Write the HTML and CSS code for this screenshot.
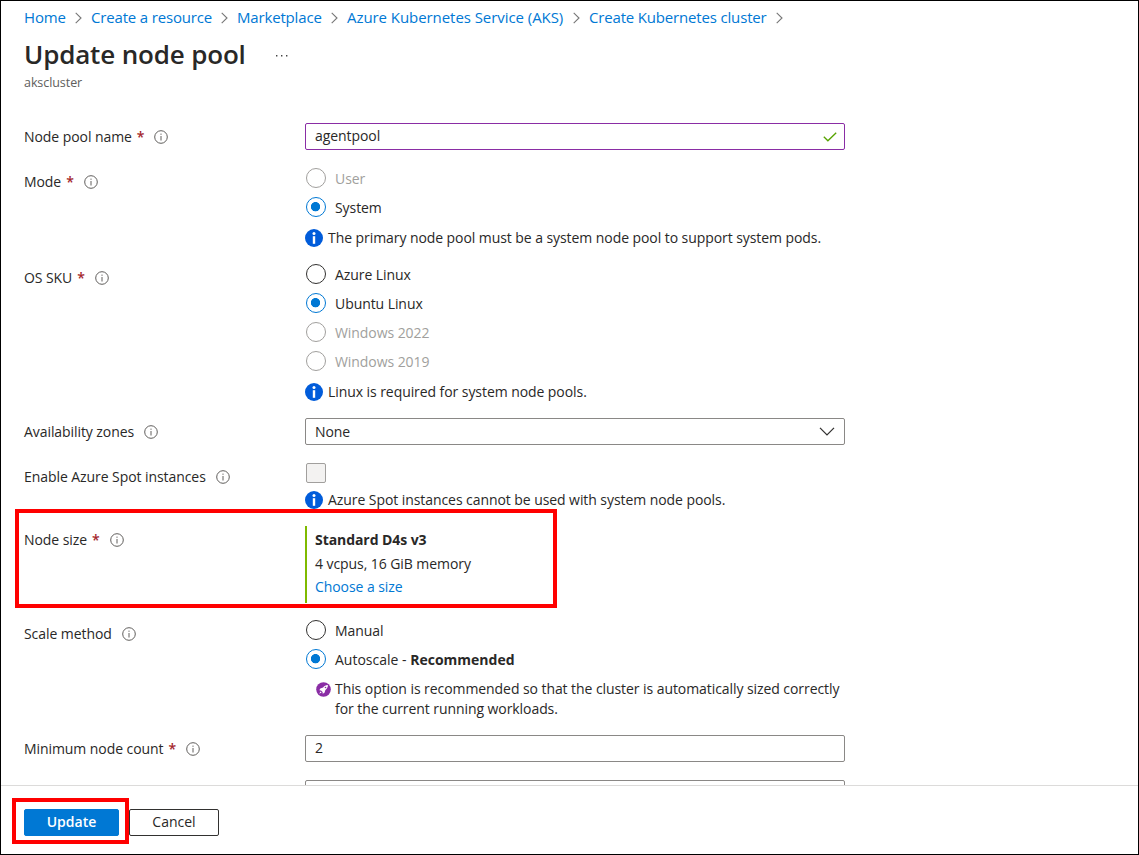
FILE: index.html
```html
<!DOCTYPE html>
<html lang="en">
<head>
<meta charset="utf-8">
<title>Update node pool</title>
<link rel="stylesheet" href="styles.css">
</head>
<body>
<svg class="defs" width="0" height="0">
  <symbol id="chevron" viewBox="0 0 7 12"><path d="M.7.9 6 6 .7 11.100" fill="none" stroke="#777" stroke-width="1.100"/></symbol>
  <symbol id="help" viewBox="0 0 14 14"><circle cx="7" cy="7" r="6.300" fill="none" stroke="#605e5c" stroke-width="1"/><path d="M7 6v4.500M7 3.600v1.200" stroke="#605e5c" stroke-width="1"/></symbol>
  <symbol id="info" viewBox="0 0 18 18"><circle cx="9" cy="9" r="9" fill="#015cda"/><circle cx="9" cy="4.500" r="1.500" fill="#fff"/><path d="M7.800 7.200h2.400v7.600H7.800z" fill="#fff"/></symbol>
</svg>
<div class="page">
  <nav class="crumbs">
    <a class="c1">Home</a><svg><use href="#chevron"/></svg>
    <a class="c2">Create a resource</a><svg><use href="#chevron"/></svg>
    <a class="c3">Marketplace</a><svg><use href="#chevron"/></svg>
    <a class="c4">Azure Kubernetes Service (AKS)</a><svg><use href="#chevron"/></svg>
    <a class="c5">Create Kubernetes cluster</a><svg><use href="#chevron"/></svg>
  </nav>
  <header class="heading">
    <h1>Update node pool</h1>
    <svg class="more" viewBox="0 0 14 4"><path d="M1 1h1.400v1.400H1zM6 1h1.400v1.400H6zM11 1h1.400v1.400H11z" fill="#444"/></svg>
  </header>
  <p class="subtitle">akscluster</p>

  <main class="form">
    <section class="row wide">
      <div class="label"><span>Node pool name</span><b>*</b><svg><use href="#help"/></svg></div>
      <div class="field"><div class="box input valid"><span>agentpool</span><svg class="check" viewBox="0 0 14 10"><path d="M.8 4.800 4.900 8.800 13.200.8" fill="none" stroke="#57a300" stroke-width="1.300"/></svg></div></div>
    </section>
    <section class="row">
      <div class="label"><span>Mode</span><b>*</b><svg><use href="#help"/></svg></div>
      <div class="field">
        <div class="radio off"><i></i><span>User</span></div>
        <div class="radio on"><i></i><span>System</span></div>
        <div class="message"><svg><use href="#info"/></svg><span>The primary node pool must be a system node pool to support system pods.</span></div>
      </div>
    </section>
    <section class="row">
      <div class="label"><span>OS SKU</span><b>*</b><svg><use href="#help"/></svg></div>
      <div class="field">
        <div class="radio"><i></i><span>Azure Linux</span></div>
        <div class="radio on"><i></i><span>Ubuntu Linux</span></div>
        <div class="radio off"><i></i><span>Windows 2022</span></div>
        <div class="radio off"><i></i><span>Windows 2019</span></div>
        <div class="message"><svg><use href="#info"/></svg><span>Linux is required for system node pools.</span></div>
      </div>
    </section>
    <section class="row wide">
      <div class="label"><span>Availability zones</span><svg><use href="#help"/></svg></div>
      <div class="field"><div class="box"><span>None</span><svg class="caret" viewBox="0 0 16 9"><path d="M1 .9 8 7.900 15 .9" fill="none" stroke="#323130" stroke-width="1.300"/></svg></div></div>
    </section>
    <section class="row">
      <div class="label"><span>Enable Azure Spot instances</span><svg><use href="#help"/></svg></div>
      <div class="field">
        <div class="checkbox"></div>
        <div class="message tight"><svg><use href="#info"/></svg><span>Azure Spot instances cannot be used with system node pools.</span></div>
      </div>
    </section>
    <section class="row size-row">
      <div class="label"><span>Node size</span><b>*</b><svg><use href="#help"/></svg></div>
      <div class="field size"><strong>Standard D4s v3</strong><span>4 vcpus, 16 GiB memory</span><a>Choose a size</a></div>
      <div class="mark mark-size"></div>
    </section>
    <section class="row">
      <div class="label"><span>Scale method</span><svg><use href="#help"/></svg></div>
      <div class="field">
        <div class="radio"><i></i><span>Manual</span></div>
        <div class="radio on"><i></i><span class="auto">Autoscale - <strong>Recommended</strong></span></div>
        <div class="note">
          <svg viewBox="0 0 15 15"><circle cx="7.500" cy="7.500" r="7.300" fill="#8a2da5"/><path d="M11.900 3.100C9.800 3 8.200 4 7.100 5.600L4.300 6.500 3.300 8.300l1.700.1 1.600 1.600.1 1.800 1.800-1 .9-2.900C11 6.800 12 5.200 11.900 3.100zM4.500 9.400 3.200 11.800 5.600 10.500z" fill="#fff"/><circle cx="9.500" cy="5.500" r=".8" fill="#8a2da5"/></svg>
          <p><span>This option is recommended so that the cluster is automatically sized correctly</span><br><span>for the current running workloads.</span></p>
        </div>
      </div>
    </section>
    <section class="row wide">
      <div class="label"><span>Minimum node count</span><b>*</b><svg><use href="#help"/></svg></div>
      <div class="field"><div class="box input"><span>2</span></div></div>
    </section>
    <section class="row">
      <div class="label"></div>
      <div class="field"><div class="box"></div></div>
    </section>
  </main>

  <footer class="actions">
    <div class="primary-wrap"><button class="primary">Update</button><div class="mark mark-update"></div></div>
    <button class="secondary">Cancel</button>
  </footer>
</div>
</body>
</html>
```
FILE: styles.css
```css
* { box-sizing: border-box; }
body {
  margin: 0;
  background: #fff;
  color: #292827;
  font: 14px/20px "Open Sans", "Noto Sans", sans-serif;
  letter-spacing: -0.07px;
}
p, h1 { margin: 0; }
a { color: #0078d4; }
svg { flex: none; display: block; }
span, a, strong { white-space: nowrap; }
.defs { position: absolute; }

.page {
  width: 1139px;
  height: 855px;
  border: 1px solid #000;
  display: flex;
  flex-direction: column;
  overflow: hidden;
}

.crumbs { display: flex; align-items: center; height: 20px; margin: 6px 0 0 23px; font-size: 15px; letter-spacing: -0.17px; }
.crumbs svg { width: 7px; height: 12px; margin: 2px 9px 0; }
.c1 { width: 42px; }
.c2 { width: 121px; }
.c3 { width: 85px; }
.c4 { width: 217px; letter-spacing: -0.06px; }
.c5 { width: 178px; }

.heading { display: flex; align-items: center; height: 36px; margin: 9px 0 0 23px; }
h1 { width: 222px; font-size: 26px; line-height: 36px; font-weight: 600; letter-spacing: -0.16px; white-space: nowrap; }
.more { width: 14px; height: 4px; margin: 3px 0 0 29px; }
.subtitle { margin: 1px 0 0 23px; font-size: 12.5px; color: #605e5c; }

.form { flex: 1; min-height: 0; overflow: hidden; padding: 30px 0 0 23px; }
.row { display: flex; margin-bottom: 16px; }
.wide { margin-bottom: 18px; }
.label { display: flex; align-items: center; width: 281px; height: 20px; margin-top: 4px; }
.label b { margin-left: 5px; color: #a4262c; font-weight: 600; }
.label svg { width: 14px; height: 14px; margin-left: 10px; }
.field { width: 540px; }

.box { display: flex; align-items: center; justify-content: space-between; height: 27px; padding: 0 9px; border: 1px solid #8a8886; border-radius: 2px; }
.input span { padding-bottom: 2px; }
.valid { border-color: #8a2da5; }
.check { width: 14px; height: 10px; margin-right: -2px; }
.caret { width: 16px; height: 9px; }

.radio { display: flex; align-items: center; height: 20px; margin: 0 0 9px 1px; }
.radio i { width: 20px; height: 20px; margin-right: 9px; border: 1px solid #323130; border-radius: 50%; }
.radio span { padding-top: 1px; }
.radio.on i { border-color: #0078d4; background: radial-gradient(circle at 8.500px 8.700px, #0078d4 4.300px, #fff 5px); }
.radio.off { color: #a19f9d; }
.radio.off i { border-color: #a19f9d; }

.message { display: flex; align-items: center; height: 20px; margin-top: 11px; }
.message svg { width: 18px; height: 18px; margin-right: 5px; }
.message.tight { margin-top: 7px; }
.checkbox { width: 20px; height: 20px; margin-left: 1px; border: 1px solid #a19f9d; border-radius: 2px; background: #f3f2f1; }

.size-row { position: relative; margin-bottom: 17px; }
.size { display: flex; flex-direction: column; align-items: flex-start; height: 77px; padding: 4px 0 0 8px; border-left: 2px solid #7fba00; }
.size span { margin-top: 4px; }
.size a { margin-top: 3px; }
.auto { letter-spacing: 0; }
.mark { position: absolute; border: 4px solid #f00; }
.mark-size { left: -9px; top: -17px; width: 542px; height: 99px; }

.note { display: flex; margin: 10px 0 0 11px; }
.note svg { width: 15px; height: 15px; margin: 3px 4px 0 0; }

.actions { display: flex; height: 69px; padding: 23px 0 0 23px; border-top: 1px solid #dcdbda; background: #fff; }
button { height: 27px; padding: 0 0 2px; border-radius: 2px; font: inherit; line-height: 23px; }
.primary-wrap { position: relative; }
.primary { width: 95px; border: 1px solid #0078d4; background: #0078d4; color: #fff; font-weight: 600; }
.secondary { width: 90px; margin-left: 10px; border: 1px solid #323130; background: #fff; color: #292827; }
.mark-update { left: -12px; top: -11px; width: 117px; height: 46px; }
```
